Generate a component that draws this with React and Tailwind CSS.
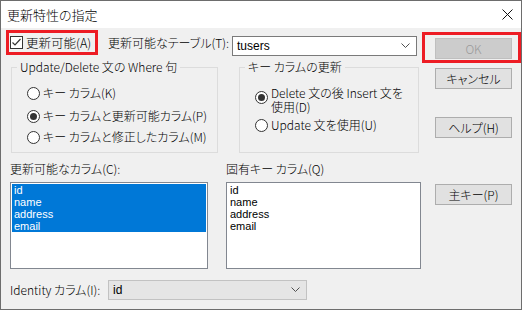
import React from "react";

const JP = {
  fontFamily: '"Noto Sans CJK JP", "Noto Sans", sans-serif',
};

function Chevron() {
  return (
    <svg width="9" height="6" viewBox="0 0 9 6" className="shrink-0">
      <path d="M0.5 0.5 L4.5 4.5 L8.5 0.5" fill="none" stroke="#505050" strokeWidth="1" />
    </svg>
  );
}

function Radio({ checked }) {
  return (
    <span className="w-[13px] h-[13px] rounded-full border border-[#333333] bg-white flex items-center justify-center shrink-0">
      {checked && <span className="w-[7px] h-[7px] rounded-full bg-[#333333]" />}
    </span>
  );
}

function Btn({ children, disabled }) {
  return (
    <div
      className={
        "w-[77px] h-[21px] flex items-center justify-center text-[12px] leading-[14px] border whitespace-nowrap " +
        (disabled
          ? "bg-[#cccccc] border-[#bfbfbf] text-[#9a9a9a]"
          : "bg-[#e1e1e1] border-[#adadad] text-black")
      }
    >
      {children}
    </div>
  );
}

export default function App() {
  const items = ["id", "name", "address", "email"];
  return (
    <div className="w-[522px] h-[311px] bg-white font-light [font-feature-settings:'palt']" style={JP}>
      <div className="w-[522px] h-[310px] border border-[#6d6d6d] bg-[#f0f0f0] flex flex-col text-black">
        {/* title bar */}
        <div className="h-[27px] bg-white flex items-center justify-between pl-[6px] pr-[8px]">
          <span className="text-[13px] leading-[16px] whitespace-nowrap">更新特性の指定</span>
          <svg width="11" height="11" viewBox="0 0 11 11">
            <path d="M0.5 0.5 L10.5 10.5 M10.5 0.5 L0.5 10.5" stroke="#111" strokeWidth="1" />
          </svg>
        </div>

        {/* body */}
        <div className="flex flex-1">
          {/* left */}
          <div className="w-[421px] flex flex-col text-[12px] leading-[14px] whitespace-nowrap">
            {/* row 1 */}
            <div className="mt-[2px] h-[25px] flex items-start">
              <div className="ml-[5px] w-[92px] h-[25px] border-[3px] border-[#ed1c24] flex items-center pl-[1px]">
                <span className="w-[13px] h-[13px] border border-[#333333] bg-white flex items-center justify-center shrink-0">
                  <svg width="11" height="11" viewBox="0 0 11 11">
                    <path d="M1.5 5.5 L4 8 L9.5 2" fill="none" stroke="#333" strokeWidth="1.2" />
                  </svg>
                </span>
                <span className="ml-[3px] text-[12.5px]">更新可能(A)</span>
              </div>
              <div className="ml-[10px] w-[124px] h-[25px] flex items-center">更新可能なテーブル(T):</div>
              <div className="mt-[6px] w-[185px] h-[20px] bg-white border border-[#7a7a7a] flex items-center justify-between pl-[4px] pr-[6px]">
                <span style={{ fontFamily: '"Liberation Sans", sans-serif' }} className="text-[12px] font-normal">
                  tusers
                </span>
                <Chevron />
              </div>
            </div>

            {/* row 2 : groups */}
            <div className="mt-[12px] flex">
              <div className="relative ml-[10px] w-[207px] h-[86px] border border-[#dcdcdc] flex flex-col pl-[15px]">
                <span className="absolute top-[-8px] left-[5px] px-[3px] bg-[#f0f0f0] leading-[14px]">
                  Update/Delete 文の Where 句
                </span>
                <div className="mt-[17px] h-[16px] flex items-center">
                  <Radio />
                  <span className="ml-[3px]">キー カラム(K)</span>
                </div>
                <div className="mt-[7px] h-[16px] flex items-center">
                  <Radio checked />
                  <span className="ml-[3px]">キー カラムと更新可能カラム(P)</span>
                </div>
                <div className="mt-[5px] h-[16px] flex items-center">
                  <Radio />
                  <span className="ml-[3px]">キー カラムと修正したカラム(M)</span>
                </div>
              </div>
              <div className="relative ml-[21px] w-[180px] h-[86px] border border-[#dcdcdc] flex flex-col pl-[15px]">
                <span className="absolute top-[-8px] left-[5px] px-[3px] bg-[#f0f0f0] leading-[14px]">
                  キー カラムの更新
                </span>
                <div className="mt-[18px] flex items-start">
                  <span className="mt-[5px]">
                    <Radio checked />
                  </span>
                  <div className="ml-[3px] flex flex-col leading-[14px]">
                    <span>Delete 文の後 Insert 文を</span>
                    <span>使用(D)</span>
                  </div>
                </div>
                <div className="mt-[3px] h-[16px] flex items-center">
                  <Radio />
                  <span className="ml-[3px]">Update 文を使用(U)</span>
                </div>
              </div>
            </div>

            {/* row 3 : lists */}
            <div className="mt-[9px] flex">
              <div className="ml-[9px] flex flex-col">
                <span className="h-[14px]">更新可能なカラム(C):</span>
                <div
                  className="mt-[6px] w-[198px] h-[87px] bg-white border border-[#828790] p-[1px] flex flex-col text-[11px] leading-[12px] font-normal"
                  style={{ fontFamily: '"Liberation Sans", sans-serif' }}
                >
                  {items.map((t) => (
                    <div key={t} className="h-[12px] bg-[#0078d7] text-white pl-[2px]">
                      {t}
                    </div>
                  ))}
                </div>
              </div>
              <div className="ml-[18px] flex flex-col">
                <span className="h-[14px]">固有キー カラム(Q)</span>
                <div
                  className="mt-[6px] w-[195px] h-[87px] bg-white border border-[#828790] p-[1px] flex flex-col text-[11px] leading-[12px] font-normal"
                  style={{ fontFamily: '"Liberation Sans", sans-serif' }}
                >
                  {items.map((t) => (
                    <div key={t} className="h-[12px] pl-[2px]">
                      {t}
                    </div>
                  ))}
                </div>
              </div>
            </div>

            {/* row 4 */}
            <div className="mt-[11px] h-[20px] flex items-center">
              <span className="ml-[9px] w-[98px]">Identity カラム(I):</span>
              <div className="w-[199px] h-[20px] bg-[#e5e5e5] border border-[#c2c2c2] flex items-center justify-between pl-[4px] pr-[6px]">
                <span className="font-normal" style={{ fontFamily: '"Liberation Sans", sans-serif' }}>
                  id
                </span>
                <Chevron />
              </div>
            </div>
          </div>

          {/* right */}
          <div className="flex flex-col">
            <div className="mt-[4px] w-[99px] h-[31px] border-[3px] border-[#ed1c24] pl-[10px] pt-[3px]">
              <Btn disabled>OK</Btn>
            </div>
            <div className="ml-[13px] mt-[5px]">
              <Btn>キャンセル</Btn>
            </div>
            <div className="ml-[13px] mt-[28px]">
              <Btn>ヘルプ(H)</Btn>
            </div>
            <div className="ml-[13px] mt-[46px]">
              <Btn>主キー(P)</Btn>
            </div>
          </div>
        </div>
      </div>
    </div>
  );
}
